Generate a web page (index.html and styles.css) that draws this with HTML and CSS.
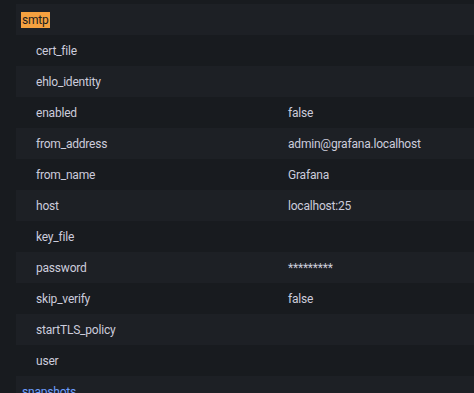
FILE: index.html
```html
<!DOCTYPE html>
<html>
<head>
<meta charset="utf-8">
<link rel="stylesheet" href="styles.css">
</head>
<body>
<div class="settings">
  <div class="section"><span class="section-name hl">smtp</span></div>
  <div class="row"><span class="key">cert_file</span><span class="val"></span></div>
  <div class="row"><span class="key">ehlo_identity</span><span class="val"></span></div>
  <div class="row"><span class="key">enabled</span><span class="val">false</span></div>
  <div class="row"><span class="key">from_address</span><span class="val">admin@grafana.localhost</span></div>
  <div class="row"><span class="key">from_name</span><span class="val">Grafana</span></div>
  <div class="row"><span class="key">host</span><span class="val">localhost:25</span></div>
  <div class="row"><span class="key">key_file</span><span class="val"></span></div>
  <div class="row"><span class="key">password</span><span class="val">*********</span></div>
  <div class="row"><span class="key">skip_verify</span><span class="val">false</span></div>
  <div class="row"><span class="key">startTLS_policy</span><span class="val"></span></div>
  <div class="row"><span class="key">user</span><span class="val"></span></div>
  <div class="section"><span class="section-name link">snapshots</span></div>
</div>
</body>
</html>
```
FILE: styles.css
```css
html, body {
  margin: 0;
  padding: 0;
  background: #181b1f;
  overflow: hidden;
}
body {
  font-family: Roboto, "Liberation Sans", sans-serif;
  font-size: 12px;
  letter-spacing: -0.2px;
  color: #ccccdc;
  height: 393px;
}
.settings {
  margin-left: 16px;
  margin-top: 4px;
  display: flex;
  flex-direction: column;
}
.section, .row {
  height: 31px;
  flex: none;
  display: flex;
  align-items: center;
}
.settings > :nth-child(odd) {
  background: #1d2025;
}
.settings > :nth-child(even) {
  background: #181b1f;
}
.section {
  padding-left: 5px;
}
.section-name {
  line-height: 16px;
  padding: 0 1px;
}
.hl {
  background: #f5a140;
  color: #1b1d21;
}
.link {
  color: #6e9fff;
}
.row .key {
  width: 252px;
  padding-left: 20px;
  flex: none;
}
.row .val {
  flex: 1;
}
```
